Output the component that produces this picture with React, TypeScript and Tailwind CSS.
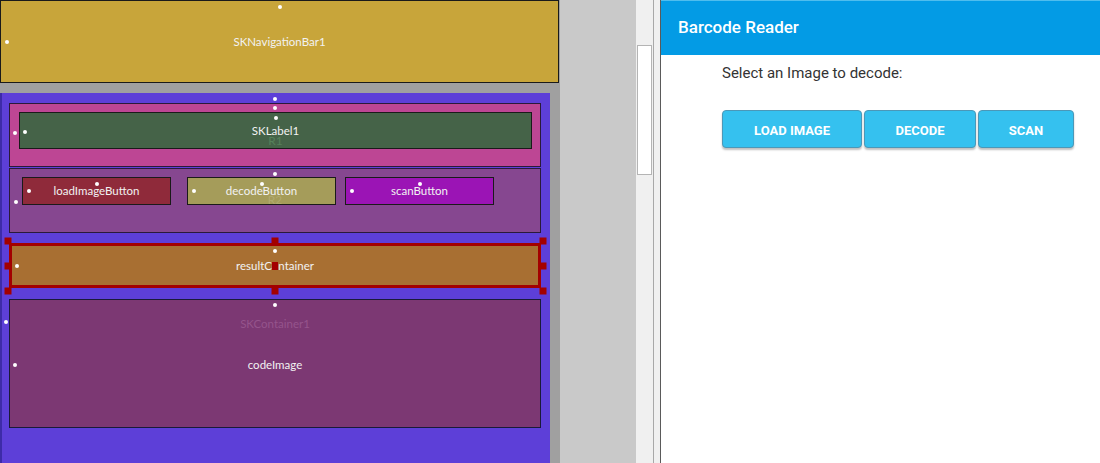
import React from 'react';

// small white anchor dot of the designer
function Dot({ className }: { className: string }) {
  return <span className={`absolute w-[4px] h-[4px] rounded-full bg-white ${className}`} />;
}

function Handle({ className }: { className: string }) {
  return <span className={`absolute w-[7px] h-[7px] bg-[#a30000] -translate-x-1/2 -translate-y-1/2 ${className}`} />;
}

const label = 'text-[11.5px] text-[#f2f2f2] leading-none';

export default function App() {
  const buttons = [
    { name: 'loadImageButton', bg: 'bg-[#8f2a3a]', ml: 'ml-[12px]' },
    { name: 'decodeButton', bg: 'bg-[#a59c5a]', ml: 'ml-[16px]' },
    { name: 'scanButton', bg: 'bg-[#9b14b5]', ml: 'ml-[9px]' },
  ];

  return (
    <div className="flex w-[1100px] h-[463px] overflow-hidden bg-[#c9c9c9]" style={{ fontFamily: 'Lato, "Noto Sans", sans-serif' }}>
      {/* designer canvas */}
      <div className="w-[636px] shrink-0 h-full">
        <div className="w-[560px] h-full bg-[#a0a0a0] flex flex-col">
          <div className="relative h-[83px] w-[559px] border border-[#1a1a1a] bg-[#c8a53a] flex items-center justify-center">
            <Dot className="top-[4px] left-1/2 -translate-x-1/2" />
            <Dot className="left-[4px] top-1/2 -translate-y-1/2" />
            <span className={label}>SKNavigationBar1</span>
          </div>

          <div className="relative mt-[10px] w-[550px] flex-1 bg-[#5d3fd8] border-l-2 border-[#3d2ba8] pl-[7px] pt-[10px] flex flex-col">
            <Dot className="top-[4px] left-[273px] -translate-x-1/2" />
            <Dot className="top-[227px] left-[2px]" />

            {/* R1 */}
            <div className="relative w-[532px] h-[64px] border border-[#2a1a3a] bg-[#bd4694] pt-[8px] pl-[9px]">
              <Dot className="top-[2px] left-1/2 -translate-x-1/2" />
              <Dot className="top-[27px] left-[3px]" />
              <div className="relative w-[513px] h-[37px] border border-[#1a1a1a] bg-[#456348] flex items-center justify-center">
                <Dot className="top-[3px] left-1/2 -translate-x-1/2" />
                <Dot className="top-[17px] left-[3px]" />
                <span className="absolute left-1/2 -translate-x-1/2 top-[22px] text-[12px] leading-none text-[#55805a]">R1</span>
                <span className={`relative ${label}`}>SKLabel1</span>
              </div>
            </div>

            {/* R2 */}
            <div className="relative mt-[1px] w-[532px] h-[65px] border border-[#2a1a3a] bg-[#864790] pt-[8px] flex">
              <Dot className="top-[3px] left-1/2 -translate-x-1/2" />
              <Dot className="top-[31px] left-[4px]" />
              {buttons.map((b) => (
                <div key={b.name} className={`relative w-[149px] h-[28px] border border-[#1a1a1a] ${b.bg} ${b.ml} flex items-center justify-center`}>
                  <Dot className="top-[4px] left-1/2 -translate-x-1/2" />
                  <Dot className="top-1/2 -translate-y-1/2 left-[4px]" />
                  <span className={label}>{b.name}</span>
                </div>
              ))}
              <span className="absolute left-1/2 -translate-x-1/2 top-[25px] text-[12px] leading-none text-white/15">R2</span>
            </div>

            {/* resultContainer (selected) */}
            <div className="relative mt-[10px] w-[532px] h-[45px] border-[3px] border-[#a30000] bg-[#a86f32] flex items-center justify-center">
              <Dot className="top-[3px] left-1/2 -translate-x-1/2" />
              <Dot className="top-1/2 -translate-y-1/2 left-[3px]" />
              <span className={label}>resultContainer</span>
              <Handle className="left-[-4px] top-[-5px]" />
              <Handle className="left-1/2 top-[-5px]" />
              <Handle className="left-[531px] top-[-5px]" />
              <Handle className="left-[-4px] top-1/2" />
              <Handle className="left-[531px] top-1/2" />
              <Handle className="left-[-4px] top-[45px]" />
              <Handle className="left-1/2 top-[45px]" />
              <Handle className="left-[531px] top-[45px]" />
              <Handle className="left-1/2 top-1/2 !w-[6px] !h-[8px]" />
            </div>

            {/* SKContainer1 */}
            <div className="relative mt-[11px] w-[532px] h-[129px] border border-[#1a1a3a] bg-[#7c3873] flex flex-col items-center">
              <Dot className="top-[3px] left-1/2 -translate-x-1/2" />
              <Dot className="top-[63px] left-[3px]" />
              <span className="mt-[18px] text-[11.5px] leading-none text-[#95548c]">SKContainer1</span>
              <span className={`mt-[29px] ${label}`}>codeImage</span>
            </div>
          </div>
        </div>
      </div>

      {/* scrollbar */}
      <div className="w-[17px] shrink-0 h-full bg-[#f0f0f0] pt-[45px] pl-[1px]">
        <div className="w-[15px] h-[130px] bg-white border border-[#b4b4b4]" />
      </div>

      {/* splitter */}
      <div className="w-[8px] shrink-0 h-full bg-[#f0f0f0] border-l border-[#a8a8a8] border-r border-r-[#5a5a5a]" />

      {/* preview */}
      <div className="flex-1 h-full bg-white flex flex-col" style={{ fontFamily: 'Roboto, sans-serif' }}>
        <div className="h-[55px] bg-[#039be5] border-t border-[#4fbdee] flex items-center pl-[17px]">
          <span className="text-[17px] font-medium text-white">Barcode Reader</span>
        </div>
        <div className="pl-[61px] pt-[9px]">
          <p className="text-[15px] leading-[18px] text-[#333]">Select an Image to decode:</p>
          <div className="mt-[28px] flex gap-[2px]">
            {[
              { t: 'LOAD IMAGE', w: 'w-[140px]' },
              { t: 'DECODE', w: 'w-[112px]' },
              { t: 'SCAN', w: 'w-[96px]' },
            ].map((b) => (
              <button
                key={b.t}
                className={`${b.w} h-[38px] pt-[3px] rounded-[4px] bg-[#35c1ef] border border-[#4b98b8] shadow-[0_2px_2px_rgba(0,0,0,0.25)] text-white text-[13px] font-bold`}
              >
                {b.t}
              </button>
            ))}
          </div>
        </div>
      </div>
    </div>
  );
}
